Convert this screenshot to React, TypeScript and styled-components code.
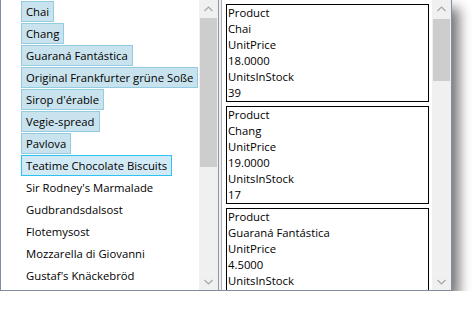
import styled, { createGlobalStyle } from "styled-components";

const GlobalStyle = createGlobalStyle`
  html, body {
    margin: 0;
    padding: 0;
    background: #ffffff;
  }
  body {
    font-family: "Open Sans", "Noto Sans", sans-serif;
    font-size: 11.3px;
    color: #000000;
  }
`;

const Window = styled.div`
  display: flex;
  width: 450px;
  height: 290px;
  border: 1px solid #7f8d9d;
  border-top: none;
  background: #f0f0f0;
  box-shadow: 7px 8px 12px rgba(0, 0, 0, 0.55);
`;

const LeftList = styled.div`
  display: flex;
  width: 217px;
  background: #ffffff;
  border-right: 1px solid #8c99a8;
`;

const Items = styled.div`
  flex: 1;
  display: flex;
  flex-direction: column;
  align-items: flex-start;
  padding: 1px 0 0 20px;
  overflow: hidden;
`;

const Item = styled.div<{ $selected?: boolean; $focused?: boolean }>`
  height: 19px;
  line-height: 19px;
  padding: 0 4px;
  margin-bottom: 1px;
  white-space: nowrap;
  border: 1px solid
    ${(p) => (p.$focused ? "#2cc3f2" : p.$selected ? "#93cbe1" : "transparent")};
  background: ${(p) =>
    p.$focused ? "#d2eaf5" : p.$selected ? "#c9e3ee" : "transparent"};
`;

const ScrollBar = styled.div<{ $width: number }>`
  display: flex;
  flex-direction: column;
  width: ${(p) => p.$width}px;
  background: #f0f0f0;
`;

const Arrow = styled.div`
  height: 17px;
  display: flex;
  align-items: center;
  justify-content: center;
`;

const Track = styled.div<{ $top: number; $thumb: number }>`
  flex: 1;
  padding-top: ${(p) => p.$top}px;
  & > div {
    height: ${(p) => p.$thumb}px;
    margin: 0 1px;
    background: #cdcdcd;
  }
`;

const Divider = styled.div`
  width: 2px;
`;

const RightList = styled.div`
  flex: 1;
  display: flex;
  background: #ffffff;
  border-left: 1px solid #abadb3;
`;

const Cards = styled.div`
  flex: 1;
  display: flex;
  flex-direction: column;
  gap: 4px;
  padding: 4px 3px 0 4px;
  overflow: hidden;
`;

const Card = styled.div`
  flex-shrink: 0;
  min-height: 96px;
  border: 1px solid #000000;
  padding-left: 1px;
`;

const Line = styled.div`
  height: 16px;
  line-height: 16px;
  white-space: nowrap;
`;

const Chevron = ({ down }: { down?: boolean }) => (
  <svg width="9" height="6" viewBox="0 0 9 6">
    <polyline
      points={down ? "0.5,1 4.5,5 8.5,1" : "0.5,5 4.5,1 8.5,5"}
      fill="none"
      stroke="#a6a6a6"
      strokeWidth="1.2"
    />
  </svg>
);

const Scroll = ({ width, top, thumb }: { width: number; top: number; thumb: number }) => (
  <ScrollBar $width={width}>
    <Arrow>
      <Chevron />
    </Arrow>
    <Track $top={top} $thumb={thumb}>
      <div />
    </Track>
    <Arrow>
      <Chevron down />
    </Arrow>
  </ScrollBar>
);

const products = [
  "Chai",
  "Chang",
  "Guaraná Fantástica",
  "Original Frankfurter grüne Soße",
  "Sirop d'érable",
  "Vegie-spread",
  "Pavlova",
  "Teatime Chocolate Biscuits",
  "Sir Rodney's Marmalade",
  "Gudbrandsdalsost",
  "Flotemysost",
  "Mozzarella di Giovanni",
  "Gustaf's Knäckebröd",
];

// the last card runs past the bottom edge, so its stock value is not in view
const cards = [
  { name: "Chai", price: "18.0000", stock: "39" },
  { name: "Chang", price: "19.0000", stock: "17" },
  { name: "Guaraná Fantástica", price: "4.5000" },
];

export default function App() {
  return (
    <>
      <GlobalStyle />
      <Window>
        <LeftList>
          <Items>
            {products.map((p, i) => (
              <Item key={p} $selected={i < 7} $focused={i === 7}>
                {p}
              </Item>
            ))}
          </Items>
          <Scroll width={19} top={1} thumb={149} />
        </LeftList>
        <Divider />
        <RightList>
          <Cards>
            {cards.map((c) => (
              <Card key={c.name}>
                <Line>Product</Line>
                <Line>{c.name}</Line>
                <Line>UnitPrice</Line>
                <Line>{c.price}</Line>
                <Line>UnitsInStock</Line>
                {c.stock && <Line>{c.stock}</Line>}
              </Card>
            ))}
          </Cards>
          <Scroll width={19} top={2} thumb={62} />
        </RightList>
      </Window>
    </>
  );
}
